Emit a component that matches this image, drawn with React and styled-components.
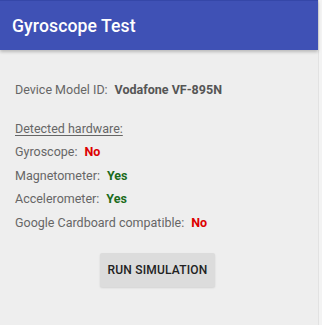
import React from "react";
import styled, { createGlobalStyle } from "styled-components";

const Global = createGlobalStyle`
  html, body { margin: 0; padding: 0; background: #f4f4f4; }
  body { font-family: Roboto, "Noto Sans", Arial, sans-serif; }
`;

const Frame = styled.div`
  display: flex;
  width: 322px;
  height: 325px;
  overflow: hidden;
`;

const Screen = styled.div`
  width: 318px;
  height: 325px;
  background: #eeeeee;
  display: flex;
  flex-direction: column;
`;

const Edge = styled.div`
  width: 4px;
  height: 325px;
  background: #f3f3f3;
  border-left: 1px solid #e2e2e2;
  box-sizing: border-box;
`;

const AppBar = styled.header`
  height: 50px;
  background: #3f51b5;
  border-top: 1px solid #3547a8;
  box-sizing: border-box;
  display: flex;
  align-items: center;
  padding-left: 12px;
  box-shadow: 0 2px 3px rgba(0, 0, 0, 0.22);
  position: relative;
  z-index: 1;
`;

const Title = styled.h1`
  margin: 0;
  color: #ffffff;
  font-size: 17.6px;
  font-weight: 500;
  letter-spacing: 0.1px;
`;

const Content = styled.main`
  display: flex;
  flex-direction: column;
  padding: 28px 0 0 15px;
`;

const Row = styled.div`
  height: 23.5px;
  display: flex;
  align-items: center;
  font-size: 12.5px;
  color: #666666;
  margin-top: ${(p) => p.$gap || 0}px;
`;

const Label = styled.span`
  text-decoration: ${(p) => (p.$underline ? "underline" : "none")};
  text-underline-offset: 2px;
`;

const Value = styled.span`
  margin-left: 7px;
  font-weight: 700;
  color: ${(p) => p.$color || "#555555"};
`;

const ButtonWrap = styled.div`
  display: flex;
  justify-content: center;
  margin-top: 19px;
  padding-right: 3px;
`;

const Button = styled.button`
  width: 115px;
  height: 34px;
  border: none;
  border-radius: 2px;
  background: #dcdcdc;
  color: #222222;
  font-family: Roboto, "Noto Sans", Arial, sans-serif;
  font-size: 12px;
  font-weight: 500;
  letter-spacing: 0.2px;
  box-shadow: 0 1px 2px rgba(0, 0, 0, 0.12);
  padding: 0;
`;

const RED = "#dd0000";
const GREEN = "#1b6b1b";

export default function App() {
  return (
    <>
      <Global />
      <Frame>
        <Screen>
          <AppBar>
            <Title>Gyroscope Test</Title>
          </AppBar>
          <Content>
            <Row>
              <Label>Device Model ID:</Label>
              <Value>Vodafone VF-895N</Value>
            </Row>
            <Row $gap={15}>
              <Label $underline>Detected hardware:</Label>
            </Row>
            <Row>
              <Label>Gyroscope:</Label>
              <Value $color={RED}>No</Value>
            </Row>
            <Row>
              <Label>Magnetometer:</Label>
              <Value $color={GREEN}>Yes</Value>
            </Row>
            <Row>
              <Label>Accelerometer:</Label>
              <Value $color={GREEN}>Yes</Value>
            </Row>
            <Row>
              <Label>Google Cardboard compatible:</Label>
              <Value $color={RED}>No</Value>
            </Row>
          </Content>
          <ButtonWrap>
            <Button>RUN SIMULATION</Button>
          </ButtonWrap>
        </Screen>
        <Edge />
      </Frame>
    </>
  );
}
